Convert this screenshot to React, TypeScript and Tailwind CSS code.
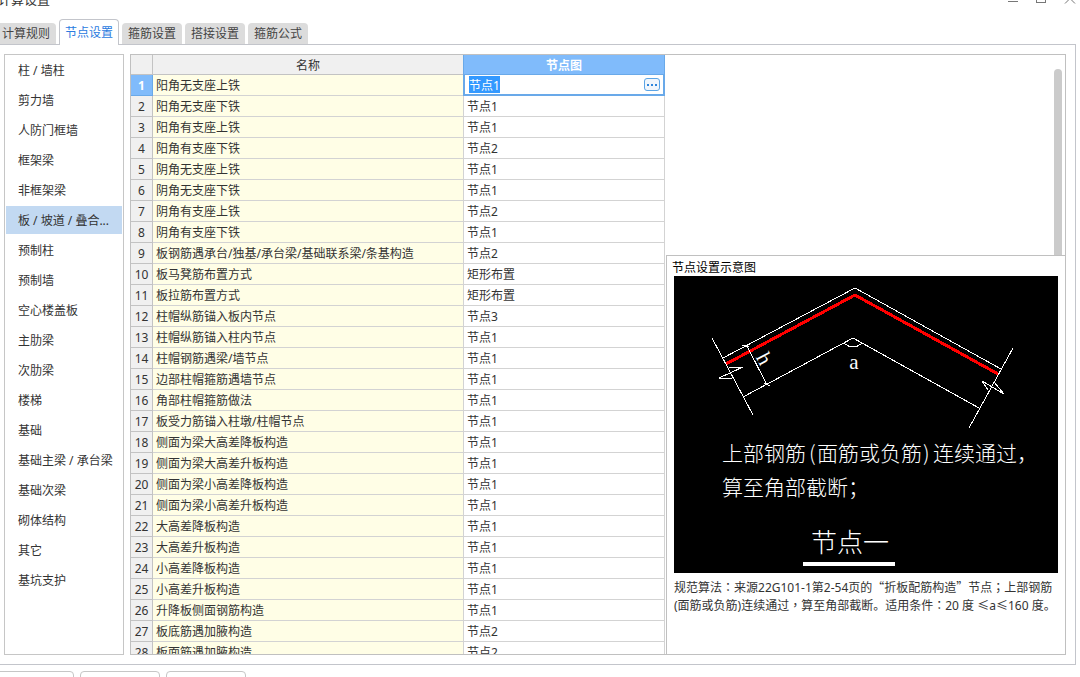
import { useEffect, useRef, type ReactNode } from "react";

const tabs = ["计算规则", "节点设置", "箍筋设置", "搭接设置", "箍筋公式"];

const categories = [
  "柱 / 墙柱",
  "剪力墙",
  "人防门框墙",
  "框架梁",
  "非框架梁",
  "板 / 坡道 / 叠合...",
  "预制柱",
  "预制墙",
  "空心楼盖板",
  "主肋梁",
  "次肋梁",
  "楼梯",
  "基础",
  "基础主梁 / 承台梁",
  "基础次梁",
  "砌体结构",
  "其它",
  "基坑支护",
];

const rows = [
  { name: "阳角无支座上铁", node: "节点1" },
  { name: "阳角无支座下铁", node: "节点1" },
  { name: "阳角有支座上铁", node: "节点1" },
  { name: "阳角有支座下铁", node: "节点2" },
  { name: "阴角无支座上铁", node: "节点1" },
  { name: "阴角无支座下铁", node: "节点1" },
  { name: "阴角有支座上铁", node: "节点2" },
  { name: "阴角有支座下铁", node: "节点1" },
  { name: "板钢筋遇承台/独基/承台梁/基础联系梁/条基构造", node: "节点2" },
  { name: "板马凳筋布置方式", node: "矩形布置" },
  { name: "板拉筋布置方式", node: "矩形布置" },
  { name: "柱帽纵筋锚入板内节点", node: "节点3" },
  { name: "柱帽纵筋锚入柱内节点", node: "节点1" },
  { name: "柱帽钢筋遇梁/墙节点", node: "节点1" },
  { name: "边部柱帽箍筋遇墙节点", node: "节点1" },
  { name: "角部柱帽箍筋做法", node: "节点1" },
  { name: "板受力筋锚入柱墩/柱帽节点", node: "节点1" },
  { name: "侧面为梁大高差降板构造", node: "节点1" },
  { name: "侧面为梁大高差升板构造", node: "节点1" },
  { name: "侧面为梁小高差降板构造", node: "节点1" },
  { name: "侧面为梁小高差升板构造", node: "节点1" },
  { name: "大高差降板构造", node: "节点1" },
  { name: "大高差升板构造", node: "节点1" },
  { name: "小高差降板构造", node: "节点1" },
  { name: "小高差升板构造", node: "节点1" },
  { name: "升降板侧面钢筋构造", node: "节点1" },
  { name: "板底筋遇加腋构造", node: "节点2" },
  { name: "板面筋遇加腋构造", node: "节点2" },
];

const TitleBar = () => (
  <header className="flex h-[19px] shrink-0 justify-between pr-1">
    <h1 className="-ml-0.5 -mt-[10px] text-[13px] leading-[18px]">计算设置</h1>
    <div className="-mt-2 flex gap-[18px] text-[#777]">
      <button aria-label="最小化" className="h-3 w-[10px]">
        <svg viewBox="0 0 10 12" className="h-3 w-[10px]" shapeRendering="crispEdges">
          <path d="M0 9.5H10" stroke="currentColor" />
        </svg>
      </button>
      <button aria-label="最大化" className="h-3 w-[10px]">
        <svg viewBox="0 0 10 12" className="h-3 w-[10px]" shapeRendering="crispEdges">
          <rect x="0.5" y="1.5" width="9" height="9" fill="none" stroke="currentColor" />
        </svg>
      </button>
      <button aria-label="关闭" className="h-3 w-3">
        <svg viewBox="0 0 12 12" className="h-3 w-3">
          <path d="M1 1.5L11 11.5M11 1.5L1 11.5" stroke="currentColor" />
        </svg>
      </button>
    </div>
  </header>
);

const TabBar = () => (
  <nav className="z-10 -mb-px -ml-1 flex shrink-0 items-end gap-[3px]">
    {tabs.map((tab) =>
      tab === "节点设置" ? (
        <button
          key={tab}
          className="h-[26px] w-[60px] rounded-t border border-b-0 border-[#c3c5cb] bg-white text-[#2a7be0]"
        >
          {tab}
        </button>
      ) : (
        <button key={tab} className="mb-px h-[21px] w-[60px] rounded-t bg-[#dcdcdc] text-[#444]">
          {tab}
        </button>
      )
    )}
  </nav>
);

const Sidebar = () => (
  <aside className="flex w-[120px] shrink-0 flex-col gap-0.5 border border-[#c6c6c6] p-px">
    {categories.map((item, index) => (
      <button
        key={item}
        className={`h-7 shrink-0 whitespace-nowrap pl-3 pt-0.5 text-left ${index === 5 ? "bg-[#c2d9f2]" : ""}`}
      >
        {item}
      </button>
    ))}
  </aside>
);

const NodeTable = () => {
  const editor = useRef<HTMLInputElement>(null);

  useEffect(() => {
    editor.current?.focus();
    editor.current?.select();
  }, []);

  return (
    <div className="w-[534px] shrink-0 overflow-hidden">
      <table className="w-full table-fixed border-separate border-spacing-0">
        <colgroup>
          <col className="w-[22px]" />
          <col />
          <col className="w-[202px]" />
        </colgroup>
        <thead>
          <tr className="h-5 bg-[#f0f0f0]">
            <th className="border-b border-r border-[#c3c3c3] p-0" />
            <th className="border-b border-[#c3c3c3] p-0 pt-0.5 font-normal">名称</th>
            <th className="border border-t-0 border-[#69a9e9] bg-[#80bbfb] p-0 pt-0.5 font-bold text-white">
              节点图
            </th>
          </tr>
        </thead>
        <tbody>
          {rows.map((row, index) => (
            <tr key={index} className="h-[21px]">
              <th
                className={
                  index === 0
                    ? "border-b border-r border-[#69a9e9] bg-[#80bbfb] p-0 pt-0.5 font-bold text-white"
                    : "border-b border-r border-[#c3c3c3] bg-[#f0f0f0] p-0 pt-0.5 font-normal"
                }
              >
                {index + 1}
              </th>
              <td className="whitespace-nowrap border-b border-[#d3d3d3] bg-[#fffee6] p-0 pl-[3px] pt-0.5">
                {row.name}
              </td>
              {index === 0 ? (
                <td className="border-2 border-t-0 border-[#69a9e9] p-0">
                  <div className="flex h-[19px] items-center justify-between pl-1 pr-[3px]">
                    <input
                      ref={editor}
                      aria-label={row.name}
                      defaultValue={row.node}
                      className="h-[17px] w-32 leading-4 outline-none selection:bg-[#3399ff] selection:text-white"
                    />
                    <button
                      aria-label="选择节点"
                      className="flex h-[13px] w-4 items-center justify-center gap-0.5 rounded-[3px] border border-[#5ba4e5] bg-[#f0f6fc]"
                    >
                      <span className="h-0.5 w-0.5 bg-[#2f86dc]" />
                      <span className="h-0.5 w-0.5 bg-[#2f86dc]" />
                      <span className="h-0.5 w-0.5 bg-[#2f86dc]" />
                    </button>
                  </div>
                </td>
              ) : (
                <td className="border-b border-l border-r border-[#d3d3d3] p-0 pl-[3px] pt-0.5">
                  {row.node}
                </td>
              )}
            </tr>
          ))}
        </tbody>
      </table>
    </div>
  );
};

const NodeDiagram = () => (
  <svg viewBox="0 0 384 297" className="w-full bg-black" fill="none" stroke="#fff">
    <g shapeRendering="crispEdges">
      <path d="M49 82L181 12L327 93" />
      <path d="M52 88L181 19L324 98" stroke="#f00" strokeWidth="3" />
      <path d="M69 121L179 62L305 132" />
      {/* section cuts with break marks */}
      <path d="M38 62L79 139M339 72L295 152" />
      <path d="M55 92L69 91L45 102L58 102" />
      <path d="M314 114L308 105L330 118L320 106" />
      {/* thickness dimension */}
      <path d="M73 70L93 109M68 69L75 71M90 107L96 110" />
      <path d="M170 67Q179 75 188 67" />
    </g>
    <g
      fill="#fff"
      stroke="none"
      className="font-['Noto_Sans_CJK_SC',sans-serif] text-[21px] font-light"
    >
      <text x="0" y="0" transform="translate(84 86) rotate(62)" textAnchor="middle" className="font-['Liberation_Serif',serif]">
        h
      </text>
      <text x="180" y="93" textAnchor="middle" className="font-['Liberation_Serif',serif]">
        a
      </text>
      <text y="185">
        <tspan x="48">上部钢筋</tspan>
        <tspan x="135">(</tspan>
        <tspan x="143">面筋或负筋</tspan>
        <tspan x="249">)</tspan>
        <tspan x="259">连续通过，</tspan>
      </text>
      <text x="48" y="219">
        算至角部截断；
      </text>
      <text x="176" y="276" textAnchor="middle" className="text-[26px]">
        节点一
      </text>
      <path d="M129 286H221V290H129Z" />
    </g>
  </svg>
);

// full-width punctuation centred in its cell
const Mark = ({ children }: { children: ReactNode }) => (
  <span lang="zh-TW" className="font-['Noto_Sans_CJK_TC',sans-serif]">
    {children}
  </span>
);

const PreviewPane = () => (
  <div className="flex min-w-0 flex-1 flex-col pl-px">
    <div className="flex h-[200px] shrink-0 justify-end pr-[3px] pt-[14px]">
      <div className="w-2 rounded-t-full bg-[#cbcbcb]" />
    </div>
    <section className="flex-1 border-l border-t border-[#c0c0c0] pl-[7px] pr-[7px] pt-[3px]">
      <h2 className="-ml-0.5 h-[17px] leading-[17px] text-black">节点设置示意图</h2>
      <NodeDiagram />
      <p className="mt-[5px] whitespace-nowrap leading-[17px]">
        规范算法<Mark>：</Mark>来源22G101-1第2-54页的
        <span className="font-['Noto_Sans_CJK_SC',sans-serif]">“折板配筋构造”</span>
        节点<Mark>；</Mark>上部钢筋
        <br />
        (面筋或负筋)连续通过<Mark>，</Mark>算至角部截断。适用条件<Mark>：</Mark>20 度 ≤a≤160 度。
      </p>
    </section>
  </div>
);

const App = () => {
  return (
    <div
      lang="zh-CN"
      className="flex h-screen flex-col overflow-hidden bg-white font-['Noto_Sans','Noto_Sans_CJK_SC',sans-serif] text-[12px] leading-4 text-[#333]"
    >
      <TitleBar />
      <TabBar />
      <main className="mr-1 flex min-h-0 flex-1 gap-[6px] border-b border-r border-t border-[#c3c5cb] py-[9px] pl-1 pr-[9px]">
        <Sidebar />
        <div className="flex min-w-0 flex-1 border border-[#c0c0c0]">
          <NodeTable />
          <PreviewPane />
        </div>
      </main>
      <footer className="-ml-[6px] flex h-3 shrink-0 gap-[6px] overflow-hidden pt-[6px]">
        <button aria-label="导入规则" className="h-6 w-20 rounded-t border border-[#c6c6c6]" />
        <button aria-label="导出规则" className="h-6 w-20 rounded-t border border-[#c6c6c6]" />
        <button aria-label="恢复默认值" className="h-6 w-20 rounded-t border border-[#c6c6c6]" />
      </footer>
    </div>
  );
};

export default App;
